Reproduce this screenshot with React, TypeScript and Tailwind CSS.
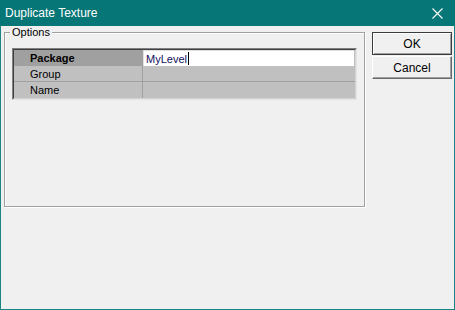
import React from 'react';

const rows = [
  { label: 'Package', value: 'MyLevel', active: true },
  { label: 'Group', value: '', active: false },
  { label: 'Name', value: '', active: false },
];

const App: React.FC = () => {
  return (
    <div
      className="w-[455px] h-[310px] flex flex-col bg-[#f0f0f0] text-black"
      style={{ fontFamily: '"Liberation Sans", Arial, sans-serif' }}
    >
      {/* Title bar */}
      <div className="h-[26px] bg-[#077676] flex items-center justify-between pl-[5px] pr-[12px] shrink-0">
        <span className="text-white text-[12px]">Duplicate Texture</span>
        <svg width="11" height="11" viewBox="0 0 11 11" className="text-white">
          <path d="M0.5 0.5 L10.5 10.5 M10.5 0.5 L0.5 10.5" stroke="currentColor" strokeWidth="1.1" />
        </svg>
      </div>

      {/* Body */}
      <div className="flex-1 flex border-x border-b border-[#1b8585] pl-[3px] pr-[2px] pt-[6px] gap-[7px]">
        {/* Options group */}
        <div className="relative w-[361px] h-[175px] border border-[#a0a0a0] shadow-[inset_1px_1px_0_#fff,1px_1px_0_#fff] pl-[7px] pr-[7px] pt-[15px]">
          <span className="absolute left-[5px] top-[-7px] bg-[#f0f0f0] px-[2px] text-[11px] leading-[13px]">
            Options
          </span>

          {/* Property grid */}
          <div className="w-[345px] border-2 border-t-[#808080] border-l-[#808080] border-b-[#e3e3e3] border-r-[#e3e3e3]">
            <div className="border border-t-[#404040] border-l-[#404040] border-b-[#d4d4d4] border-r-[#d4d4d4] -m-px">
              {rows.map((r, i) => (
                <div
                  key={r.label}
                  className={`flex h-[16px] text-[11px] leading-[16px] ${i < rows.length - 1 && !r.active ? 'border-b border-[#a0a0a0]' : ''}`}
                >
                  <div
                    className={`w-[129px] pl-[16px] shrink-0 border-r border-[#a0a0a0] ${r.active ? 'bg-[#a0a0a0] font-bold' : 'bg-[#c0c0c0]'}`}
                  >
                    {r.label}
                  </div>
                  <div className="flex-1 bg-[#c0c0c0] pr-px">
                    {r.active && (
                      <div className="h-[16px] bg-white border-t border-l border-[#e0e0e0] pl-[2px] flex items-center text-[#101060]">
                        <span>{r.value}</span>
                        <span className="w-px h-[13px] bg-black ml-[1px]" />
                      </div>
                    )}
                  </div>
                </div>
              ))}
            </div>
          </div>
        </div>

        {/* Buttons */}
        <div className="w-[80px] flex flex-col gap-[1px]">
          <button className="h-[23px] border border-[#3c3c3c] bg-[#f0f0f0] text-[12px] flex items-center justify-center shadow-[inset_1px_1px_0_#fff,inset_-1px_-1px_0_#a0a0a0]">
            OK
          </button>
          <button className="h-[23px] border border-t-white border-l-white border-b-[#696969] border-r-[#696969] bg-[#f0f0f0] text-[12px] flex items-center justify-center shadow-[inset_-1px_-1px_0_#a0a0a0]">
            Cancel
          </button>
        </div>
      </div>
    </div>
  );
};

export default App;
